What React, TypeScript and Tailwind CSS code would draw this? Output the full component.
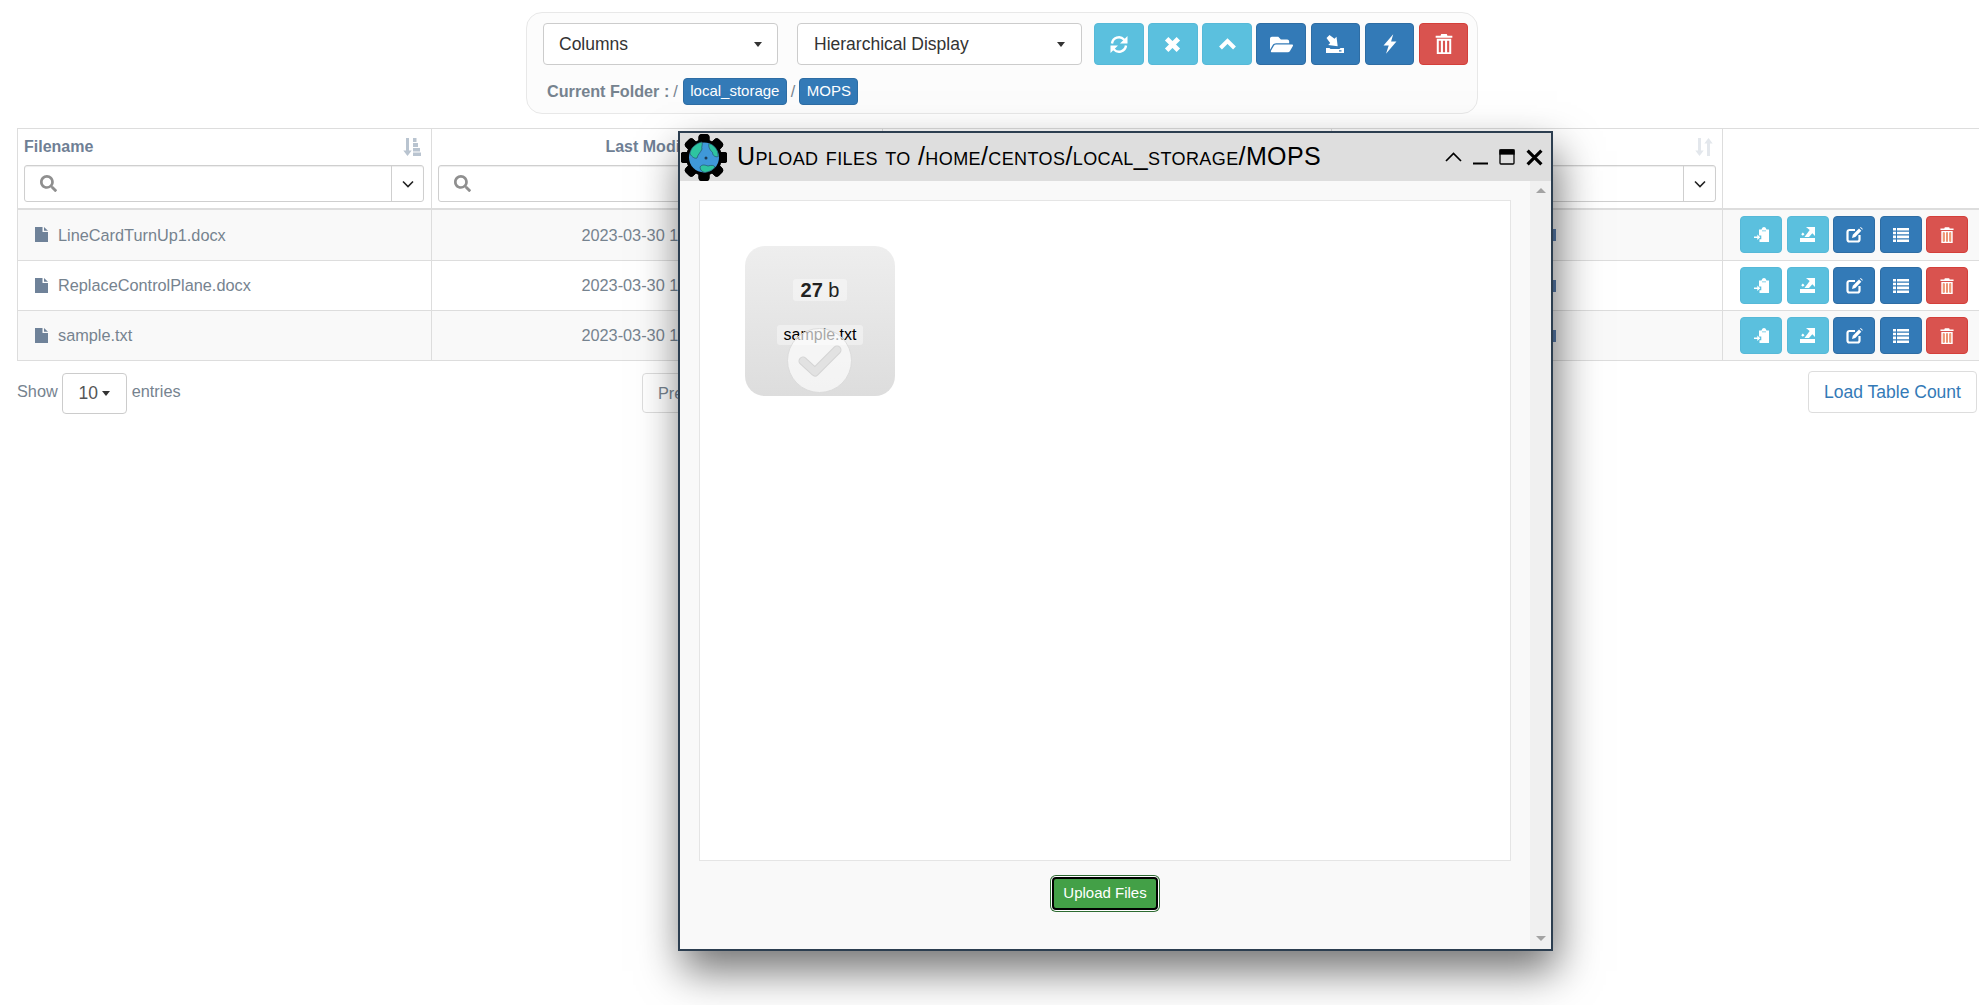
import React from "react";
import { FaSearch, FaFolderOpen } from "react-icons/fa";

const Trash = ({ w, h, stripes = false }: { w: number; h: number; stripes?: boolean }) => (
  <svg width={w} height={h} viewBox="0 0 16 18" fill="white">
    <path d="M5.5 0h5l.6 1.5H15.5V3.300H.5V1.500H4.900z" />
    <path d="M1.500 4.300h13V18h-13zM3.300 6v10.500h1.900V6zM7.050 6v10.500h1.900V6zM10.800 6v10.500h1.900V6z" fillRule="evenodd" />
    {stripes && <path d="M3.300 6h1.900v10.500H3.300zM7.050 6h1.900v10.500H7.050zM10.800 6h1.900v10.500h-1.900z" fill="#f09a70" />}
  </svg>
);

const RefreshIcon = () => (
  <svg width="20" height="21" viewBox="0 0 20 20" fill="white">
    <path d="M3 9a7 7 0 0 1 12-4l1.500 1.500" fill="none" stroke="white" strokeWidth="2.400" />
    <path d="M18.500 1.500V9H11z" />
    <path d="M17 11a7 7 0 0 1-12 4l-1.500-1.500" fill="none" stroke="white" strokeWidth="2.400" />
    <path d="M1.500 18.500V11H9z" />
  </svg>
);

const RemoveIcon = () => (
  <svg width="17" height="17" viewBox="0 0 16 16" stroke="white" strokeWidth="4.600"><path d="M2.500 2.500l11 11M13.500 2.500l-11 11" /></svg>
);

const UpIcon = () => (
  <svg width="17" height="12" viewBox="0 0 17 12" fill="none" stroke="white" strokeWidth="4"><path d="M1.500 10l7-7 7 7" /></svg>
);

const BoltIcon = () => (
  <svg width="14" height="20" viewBox="0 0 13 18" fill="white"><path d="M9.500 0L.5 10.500h4.800L2.800 18l9.700-11.300H7.500z" /></svg>
);

const ImportIcon = () => (
  <svg width="18" height="18" viewBox="0 0 18 18" fill="white">
    <path d="M3.500 0l5 3.800 2-2 1.200 9.500-9.500-1.200 2-2L.5 3z" />
    <path d="M0 13h3.500l1 1h9l1-1H18v5H0zM13 15.300v1.200h2.500v-1.200z" fillRule="evenodd" />
  </svg>
);

const ExportIcon = () => (
  <svg width="15" height="15" viewBox="0 0 15 15" fill="white">
    <path d="M6 0h9v9l-2.700-2.700L9 10H4.500L9.700 3z" />
    <path d="M2.800 5.500l1.700 1.700-1.700 1.600-1.600-1.600z" />
    <path d="M0 11h15v4H0z" />
  </svg>
);

const ClipboardIcon = () => (
  <svg width="15" height="15" viewBox="0 0 15 15" fill="white">
    <path d="M5 2.500h2.500C8 .8 9 0 10 0s2 .8 2.500 2.500H15V15H5.500v-2.800h1.800V8.500H5zM8 3.500v.8h4v-.8z" fillRule="evenodd" />
    <path d="M0 9.500h3.300V7.500l3 2.800-3 2.800v-2H0z" />
  </svg>
);

const EditIcon = () => (
  <svg width="17" height="16" viewBox="0 0 17 16" fill="white">
    <path d="M9 3H3.500A2 2 0 0 0 1.500 5v7.500a2 2 0 0 0 2 2h8a2 2 0 0 0 2-2V8" fill="none" stroke="white" strokeWidth="2.200" />
    <path d="M6 11l.8-3.300L13 1.500l2.300 2.300-6 6.300zM14 .5l.8-.5 2 2-.5.800z" />
  </svg>
);

const ListIcon = () => (
  <svg width="16" height="14" viewBox="0 0 16 14" fill="white">
    <path d="M0 0h3v2.600H0zM4 0h12v2.600H4zM0 3.700h3v2.600H0zM4 3.700h12v2.600H4zM0 7.600h3v2.600H0zM4 7.600h12v2.600H4zM0 11.400h3V14H0zM4 11.400h12V14H4z" />
  </svg>
);

const FileIcon = () => (
  <svg width="13" height="15" viewBox="0 0 13 15" fill="#6f8299">
    <path d="M0 0h7.500v5H13v10H0z" />
    <path d="M9 0l4 3.800H9z" />
  </svg>
);

const SortIcon = ({ color }: { color: string }) => (
  <svg width="18" height="18" viewBox="0 0 18 18" fill={color}>
    <path d="M3 0h3v12.500h2.700L4.500 18 .3 12.500H3z" />
    <path d="M10 0h3.500v4H10zM10 5h5v4h-5zM10 10h7v3.500h-7zM10 14.500h8V18h-8z" />
  </svg>
);

const SortBothIcon = ({ color }: { color: string }) => (
  <svg width="18" height="18" viewBox="0 0 18 18" fill={color}>
    <path d="M3 0h3v12.500h2.700L4.500 18 .3 12.500H3z" />
    <path d="M12 18h3V5.500h2.700L13.500 0 9.300 5.500H12z" />
  </svg>
);

const Caret = () => <span className="w-0 h-0 border-x-[4.5px] border-x-transparent border-t-[5px] border-t-[#333]" />;

const GearGlobe = () => (
  <svg width="46" height="47" viewBox="0 0 46 47" className="shrink-0">
    <g fill="#000">
      {[0, 45, 90, 135, 180, 225, 270, 315].map((a) => (
        <rect key={a} x="17.500" y="0" width="11" height="47" rx="3.500" transform={`rotate(${a} 23 23.500)`} />
      ))}
      <circle cx="23" cy="23.500" r="18" />
    </g>
    <circle cx="23" cy="23.500" r="15" fill="#3f98d9" />
    <path d="M11.500 13.500c3-3 6-5 9.500-5.500 1 3-1 5 0 7-1 3-4 5-5 9-2 1-5-1-7-4 0-2 1-4.500 2.500-6.500z" fill="#2ec4a0" stroke="#27506b" strokeWidth="0.700" />
    <path d="M28 9.500c4 1 7 4 8.500 8l.8 5c-3 1-5.800-1-5.800-4-2-2-4.500-5-3.500-9z" fill="#2ec4a0" stroke="#27506b" strokeWidth="0.700" />
    <path d="M19 33c2-3 5-2 8-1 3-1 6-1 7 1-2 3-6 5-10 5.500-3-.5-5-2.500-5-5.500z" fill="#2ec4a0" stroke="#27506b" strokeWidth="0.700" />
    <circle cx="25" cy="24" r="1.500" fill="#1d3c55" />
  </svg>
);

const cellBtn = "w-[42px] h-[37px] rounded-[4px] flex items-center justify-center border";
const info = "bg-[#5bc0de] border-[#56b9d8]";
const primary = "bg-[#337ab7] border-[#2e6da4]";
const danger = "bg-[#d9534f] border-[#d43f3a]";

const ToolButton = ({ kind, children }: { kind: string; children: React.ReactNode }) => (
  <div className={`w-[49.5px] h-[42px] rounded-[4px] flex items-center justify-center border ${kind}`}>{children}</div>
);

const Actions = () => (
  <div className="flex gap-[4.5px] pl-[17px]">
    <div className={`${cellBtn} ${info}`}><ClipboardIcon /></div>
    <div className={`${cellBtn} ${info}`}><ExportIcon /></div>
    <div className={`${cellBtn} ${primary}`}><EditIcon /></div>
    <div className={`${cellBtn} ${primary}`}><ListIcon /></div>
    <div className={`${cellBtn} ${danger}`}><Trash w={14} h={16} stripes /></div>
  </div>
);

const Filter = () => (
  <div className="flex h-[37px] border border-[#cfcfcf] rounded-[3px] bg-white shadow-[inset_0_1px_1px_rgba(0,0,0,0.075)]">
    <div className="flex-1 flex items-center pl-[15px]">
      <FaSearch className="text-[#8f8f8f] text-[17px]" />
    </div>
    <div className="w-[32px] border-l border-[#cfcfcf] flex items-center justify-center">
      <svg width="12" height="8" viewBox="0 0 12 8" fill="none" stroke="#222" strokeWidth="1.600"><path d="M1 1.500l5 5 5-5" /></svg>
    </div>
  </div>
);

const HeaderCell = ({ title, center, sort }: { title?: string; center?: boolean; sort: React.ReactNode }) => (
  <th className="border border-[#ddd] border-b-2 pl-[6px] pr-[6px] first:pr-[7px] align-top font-normal">
    <div className={`flex items-center h-[35px] mb-[1px] font-bold text-[16px] text-[#6f7f95] ${center ? "justify-center" : "justify-between"}`}>
      <span>{title}</span>
      <span className={center ? "hidden" : "mr-[3px]"}>{sort}</span>
    </div>
    <Filter />
  </th>
);

const rows = ["LineCardTurnUp1.docx", "ReplaceControlPlane.docx", "sample.txt"];
const rowClass = ["h-[52px] bg-[#f9f9f9]", "h-[50px] bg-white", "h-[50px] bg-[#f9f9f9]"];

function Modal() {
  return (
    <div className="absolute left-[678px] top-[131px] w-[875px] h-[820px] border-2 border-[#2c3e50] bg-[#f9f9f9] flex flex-col shadow-[4px_20px_40px_rgba(0,0,0,0.55)] z-10">
      <div className="h-[48px] bg-[#dedede] flex items-center pl-[1px] pr-[8px] shrink-0">
        <GearGlobe />
        <span className="ml-[10px] text-[25px] tracking-[0.4px] [font-variant:small-caps] text-black leading-none mb-[2px] whitespace-nowrap">
          Upload files to /home/centos/local_storage/MOPS
        </span>
        <div className="ml-auto flex items-center gap-[11px]">
          <svg width="17" height="16" viewBox="0 0 17 16" fill="none" stroke="#000" strokeWidth="1.700"><path d="M1 12l7.500-7.500L16 12" /></svg>
          <svg width="15" height="16" viewBox="0 0 15 16" fill="#000"><rect y="13.500" width="15" height="2" /></svg>
          <svg width="16" height="16" viewBox="0 0 16 16" fill="none" stroke="#000" strokeWidth="1.300"><rect x="1" y="1" width="14" height="14" rx="1" /><rect x="1" y="1" width="14" height="4" fill="#000" /></svg>
          <svg width="17" height="17" viewBox="0 0 16 16" stroke="#000" strokeWidth="3"><path d="M1.500 1.500l13 13M14.500 1.500l-13 13" /></svg>
        </div>
      </div>
      <div className="flex flex-1 min-h-0">
        <div className="flex-1 flex flex-col items-center px-[19px] pt-[19px]">
          <div className="w-full h-[661px] bg-white border border-[#e5e5e5] pl-[45px] pt-[45px]">
            <div className="relative w-[150px] h-[150px] rounded-[20px] bg-linear-to-b from-[#eeeeee] to-[#dddddd] flex flex-col items-center pt-[33px] gap-[24px]">
              <span className="h-[22px] px-[8px] rounded-[3px] bg-white/40 text-[20px] leading-[22px] text-[#222]"><b>27</b> b</span>
              <span className="h-[20px] px-[6.4px] rounded-[3px] bg-white/40 text-[16px] leading-[20px] text-black">sample.txt</span>
              <div className="absolute left-[42px] top-[82px] w-[65px] h-[65px] rounded-full bg-white/65 border border-[#dcdcdc] flex items-center justify-center">
                <svg width="44" height="34" viewBox="0 0 44 34" fill="none"><path d="M5 17l12 11L39 6" stroke="#d4d4d4" strokeWidth="9" strokeLinecap="round" strokeLinejoin="round" /><path d="M5 17l12 11L39 6" stroke="#e2e2e2" strokeWidth="7" strokeLinecap="round" strokeLinejoin="round" /></svg>
              </div>
            </div>
          </div>
          <button className="mt-[16px] w-[106px] h-[33px] rounded-[4px] border-2 border-black bg-[#43a047] text-white text-[15px] shadow-[0_0_0_1px_#ffffff,0_0_0_2px_#2e6b32]">
            Upload Files
          </button>
        </div>
        <div className="w-[21px] bg-[#f0f0f0] flex flex-col items-center justify-between pt-[7px] pb-[8px] shrink-0">
          <span className="w-0 h-0 border-x-[5px] border-x-transparent border-b-[5px] border-b-[#a3a3a3]" />
          <span className="w-0 h-0 border-x-[5px] border-x-transparent border-t-[5px] border-t-[#a3a3a3]" />
        </div>
      </div>
    </div>
  );
}

export default function App() {
  return (
    <div className="relative w-[1979px] h-[1005px] overflow-hidden bg-white font-['Liberation_Sans',Arial,sans-serif] text-[16.3px] text-[#76838f]">
      {/* toolbar */}
      <div className="pt-[12px]">
        <div className="ml-[526px] w-[952px] h-[102px] border border-[#e8e8e8] rounded-[16px] bg-[#fcfcfc] pl-[16px] pt-[10px]">
          <div className="flex">
            <div className="w-[235px] h-[42px] bg-white border border-[#ccc] rounded-[4px] flex items-center justify-between px-[15px] text-[17.5px] text-[#333]">
              Columns <Caret />
            </div>
            <div className="ml-[19px] w-[285px] h-[42px] bg-white border border-[#ccc] rounded-[4px] flex items-center justify-between px-[16px] text-[17.5px] text-[#333]">
              Hierarchical Display <Caret />
            </div>
            <div className="ml-[12px] flex gap-[4.67px]">
              <ToolButton kind={info}><RefreshIcon /></ToolButton>
              <ToolButton kind={info}><RemoveIcon /></ToolButton>
              <ToolButton kind={info}><UpIcon /></ToolButton>
              <ToolButton kind={primary}><FaFolderOpen className="text-white text-[23px]" /></ToolButton>
              <ToolButton kind={primary}><ImportIcon /></ToolButton>
              <ToolButton kind={primary}><BoltIcon /></ToolButton>
              <ToolButton kind={danger}><Trash w={18} h={20} /></ToolButton>
            </div>
          </div>
          <div className="flex items-center mt-[13px] h-[27px]">
            <span className="ml-[4px] font-bold text-[16.2px] text-[#76838f]">Current Folder :</span>
            <span className="ml-[4px] text-[#76838f]">/</span>
            <span className="ml-[5px] h-[27px] w-[104px] rounded-[4px] bg-[#337ab7] border border-[#2e6da4] text-white text-[15px] flex items-center justify-center">local_storage</span>
            <span className="ml-[4px] mr-[4px]">/</span>
            <span className="h-[27px] w-[59px] rounded-[4px] bg-[#337ab7] border border-[#2e6da4] text-white text-[15px] flex items-center justify-center">MOPS</span>
          </div>
        </div>
      </div>

      {/* table */}
      <table className="ml-[17px] mt-[14px] w-[1970px] table-fixed border-collapse">
        <colgroup>
          <col className="w-[414px]" />
          <col className="w-[451px]" />
          <col className="w-[449px]" />
          <col className="w-[391px]" />
          <col />
        </colgroup>
        <thead>
          <tr className="h-[80px]">
            <HeaderCell title="Filename" sort={<SortIcon color="#b9c4d0" />} />
            <HeaderCell title="Last Modified" center sort={null} />
            <HeaderCell center sort={null} />
            <HeaderCell sort={<SortBothIcon color="#e3e7ec" />} />
            <th className="border-y border-l border-[#ddd] border-b-2" />
          </tr>
        </thead>
        <tbody>
          {rows.map((name, i) => (
            <tr key={name} className={rowClass[i]}>
              <td className="border border-[#ddd] pl-[17px]">
                <div className="flex items-center gap-[10px]"><FileIcon /><span>{name}</span></div>
              </td>
              <td className="border border-[#ddd] text-center">2023-03-30 12:00:00</td>
              <td className="border border-[#ddd]" />
              <td className="border border-[#ddd]">
                <div className="flex justify-center"><div className="w-[58px] h-[12px] bg-[#5a7fb0]" /></div>
              </td>
              <td className="border-y border-l border-[#ddd]"><Actions /></td>
            </tr>
          ))}
        </tbody>
      </table>

      {/* footer */}
      <div className="flex mt-[12px] pl-[17px] pr-[2px]">
        <div className="w-[625px] flex items-start">
          <span className="mt-[6px]">Show</span>
          <div className="ml-[4px] w-[65px] h-[41px] border border-[#ccc] rounded-[4px] flex items-center justify-center gap-[4px] text-[17.5px] text-[#555]">
            10 <Caret />
          </div>
          <span className="ml-[5px] mt-[6px]">entries</span>
        </div>
        <div className="w-[90px] h-[40px] border border-[#ddd] rounded-l-[4px] pl-[15px] flex items-center text-[#76838f]">Previous</div>
        <div className="ml-auto w-[169px] h-[42px] -mt-[2px] border border-[#ddd] rounded-[4px] flex items-center justify-center text-[17.5px] text-[#337ab7]">
          Load Table Count
        </div>
      </div>

      <Modal />
    </div>
  );
}
